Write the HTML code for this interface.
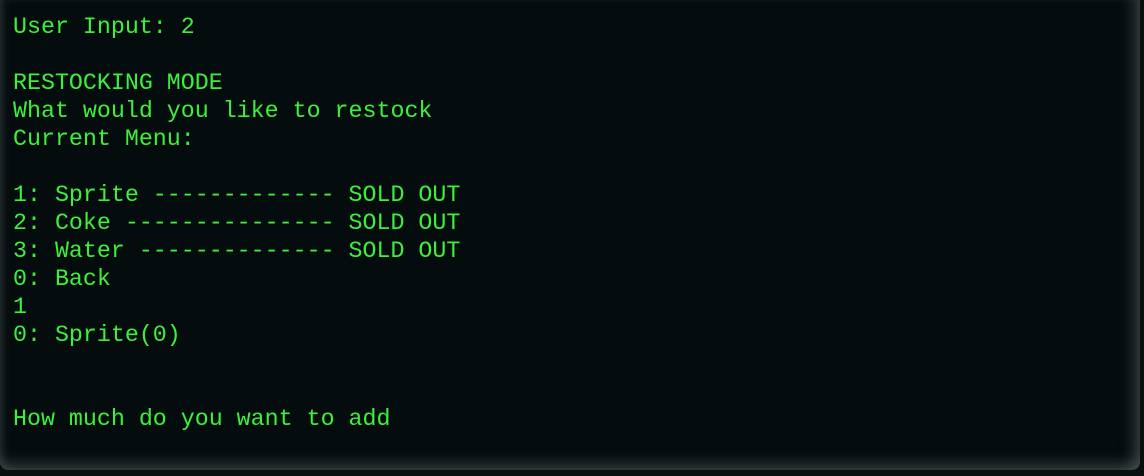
<!DOCTYPE html>
<html><head><style>
html,body{margin:0;padding:0;background:#07100f;}
.t{position:absolute;left:0;top:0;width:1140px;height:470px;background:#050c0e;border-radius:0 0 8px 8px;
box-shadow:inset 0 -14px 14px -8px rgba(90,100,100,.55),inset -14px 0 14px -8px rgba(90,100,100,.55),inset 8px 0 10px -6px rgba(90,100,100,.4);overflow:hidden}
pre{margin:0;position:absolute;left:13px;top:13px;font-family:"Liberation Mono",monospace;font-size:23.3px;line-height:28px;color:#3cf03c}
</style></head><body>
<div class="t"><pre>User Input: 2

RESTOCKING MODE
What would you like to restock
Current Menu:

1: Sprite ------------- SOLD OUT
2: Coke --------------- SOLD OUT
3: Water -------------- SOLD OUT
0: Back
1
0: Sprite(0)


How much do you want to add</pre></div>
</body></html>
